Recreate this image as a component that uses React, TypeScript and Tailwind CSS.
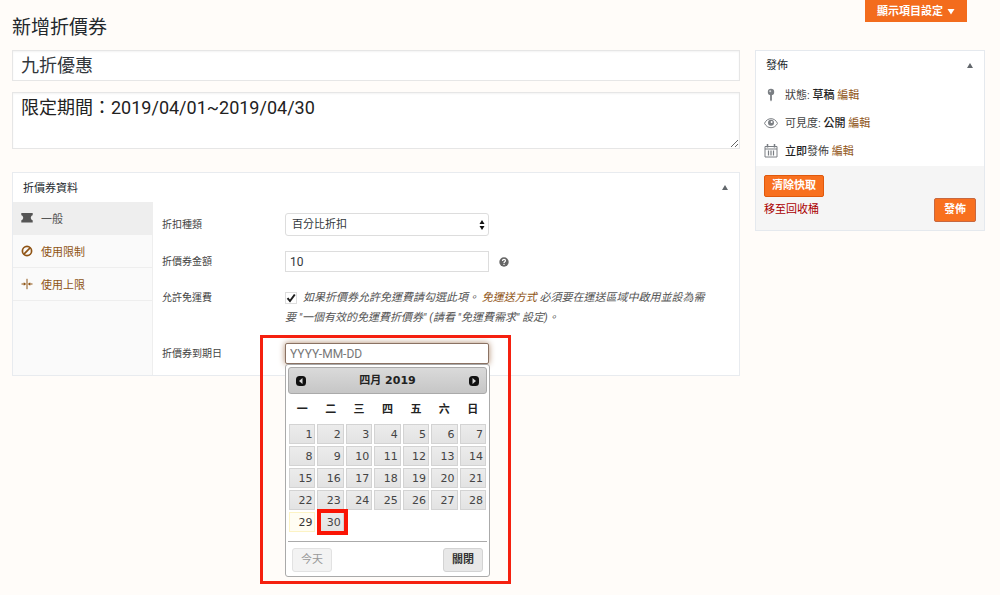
import { useState } from "react";

const WEEKDAYS = ["一", "二", "三", "四", "五", "六", "日"];
const WEEKS = [
  [1, 2, 3, 4, 5, 6, 7],
  [8, 9, 10, 11, 12, 13, 14],
  [15, 16, 17, 18, 19, 20, 21],
  [22, 23, 24, 25, 26, 27, 28],
  [29, 30],
];

function TicketIcon() {
  return (
    <svg viewBox="0 0 12 12" className="h-3 w-3" fill="currentColor" aria-hidden="true">
      <path d="M.3 1h11.4v2.200C10.500 3.500 9.800 4.500 9.800 5.700s.7 2.200 1.900 2.500v2.300H.3V8.200c1.200-.3 1.900-1.300 1.900-2.500S1.500 3.500.3 3.200z" />
    </svg>
  );
}

function BanIcon() {
  return (
    <svg viewBox="0 0 12 12" className="h-3 w-3" fill="none" stroke="currentColor" strokeWidth="1.7" aria-hidden="true">
      <circle cx="6" cy="6" r="4.600" />
      <path d="M2.900 9.100L9.100 2.900" />
    </svg>
  );
}

function LimitIcon() {
  return (
    <svg viewBox="0 0 12 12" className="h-3 w-3" fill="none" stroke="currentColor" aria-hidden="true">
      <path d="M6 .8v10.400" strokeWidth="1" />
      <path d="M.5 6h4M7.500 6h4" strokeWidth="1" />
      <path d="M2.800 4.200L5 6 2.800 7.800zM9.200 4.200L7 6l2.200 1.800z" fill="currentColor" stroke="none" />
    </svg>
  );
}

function PinIcon() {
  return (
    <svg viewBox="0 0 14 14" className="h-3.5 w-3.5" aria-hidden="true">
      <circle cx="7" cy="4" r="3.200" fill="#7a7e83" />
      <circle cx="6.200" cy="3.200" r="1" fill="#d5d7d9" />
      <path d="M6.100 6.500h1.800V12L7 13.500 6.100 12z" fill="#7a7e83" />
    </svg>
  );
}

function EyeIcon() {
  return (
    <svg viewBox="0 0 14 14" className="h-3.5 w-3.5" fill="none" stroke="#7a7e83" aria-hidden="true">
      <path d="M.5 7.300C2 4.200 4.300 2.700 7 2.700s5 1.500 6.500 4.600C12 10.300 9.700 11.700 7 11.700S2 10.300.5 7.300z" strokeWidth="1" />
      <circle cx="7" cy="6.800" r="3" fill="#7a7e83" stroke="none" />
      <circle cx="7.600" cy="5.900" r="1" fill="#fff" stroke="none" />
    </svg>
  );
}

function CalendarIcon() {
  return (
    <svg viewBox="0 0 14 14" className="h-3.5 w-3.5" fill="none" stroke="#7a7e83" aria-hidden="true">
      <path d="M1 2.500h12v10.500H1zM1 5h12" />
      <path d="M3.500 0v3.500M10.500 0v3.500" strokeWidth="1.500" />
      <path d="M4.500 6.500v5M7 6.500v5M9.500 6.500v5" strokeWidth="1.200" />
    </svg>
  );
}

function Toggle({ label }: { label: string }) {
  return (
    <button type="button" aria-label={label} className="text-[#62676c]">
      <svg viewBox="0 0 6 5" className="h-[5px] w-1.5" fill="currentColor" aria-hidden="true">
        <path d="M3 0l3 5H0z" />
      </svg>
    </button>
  );
}

const TABS = [
  { label: "一般", icon: <TicketIcon />, active: true },
  { label: "使用限制", icon: <BanIcon />, active: false },
  { label: "使用上限", icon: <LimitIcon />, active: false },
];

const STATUS = [
  { icon: <PinIcon />, label: "狀態: ", value: "草稿", rest: "" },
  { icon: <EyeIcon />, label: "可見度: ", value: "公開", rest: "" },
  { icon: <CalendarIcon />, label: "", value: "立即", rest: "發佈" },
];

function DatePicker() {
  return (
    <div className="absolute top-full -right-px left-0 z-10 rounded-[3px] border border-[#aaa] bg-white px-0.5 pt-0.5 pb-1 font-['DejaVu_Sans','Noto_Sans_CJK_TC',sans-serif] text-[11px] text-[#222]">
      <div className="flex h-[27px] items-center justify-between rounded-[3px] border border-[#aaa] bg-linear-to-b from-[#dadada] to-[#c6c6c6] px-1.5 font-bold">
        <button type="button" aria-label="上個月">
          <svg viewBox="0 0 12 12" className="h-3 w-3" aria-hidden="true">
            <rect x="1" y="1" width="10" height="10" rx="3.500" fill="#111" />
            <path d="M7.500 3v6L4 6z" fill="#d8d8d8" />
          </svg>
        </button>
        <span>四月 2019</span>
        <button type="button" aria-label="下個月">
          <svg viewBox="0 0 12 12" className="h-3 w-3" aria-hidden="true">
            <rect x="1" y="1" width="10" height="10" rx="3.500" fill="#111" />
            <path d="M4.500 3v6L8 6z" fill="#d8d8d8" />
          </svg>
        </button>
      </div>
      <table className="w-full table-fixed border-collapse">
        <thead>
          <tr className="h-[29px]">
            {WEEKDAYS.map((day) => (
              <th key={day} className="p-0 pt-0.5 font-bold">
                {day}
              </th>
            ))}
          </tr>
        </thead>
        <tbody>
          {WEEKS.map((week) => (
            <tr key={week[0]}>
              {week.map((day) => (
                <td key={day} className="relative h-[22px] p-px">
                  <button
                    type="button"
                    className={
                      day === 29
                        ? "block h-5 w-full border border-[#fcf3c4] bg-[#fffdf3] pr-0.5 text-right leading-5 text-[#363636]"
                        : "block h-5 w-full border border-[#d3d3d3] bg-linear-to-b from-[#ececec] to-[#e3e3e3] pr-0.5 text-right leading-5 text-[#444]"
                    }
                  >
                    {day}
                  </button>
                  {day === 30 && (
                    <span className="pointer-events-none absolute -inset-y-0.5 -right-[3px] left-px border-4 border-[#fa1505]" />
                  )}
                </td>
              ))}
            </tr>
          ))}
        </tbody>
      </table>
      <div className="mt-2 flex justify-between border-t border-[#aaa] px-1 pt-1.5">
        <button
          type="button"
          className="h-6 w-10 rounded-[3px] border border-[#e2e2e2] bg-[#f3f3f3] text-[#999]"
        >
          今天
        </button>
        <button
          type="button"
          className="h-6 w-10 rounded-[3px] border border-[#d3d3d3] bg-[#e8e8e8] font-bold text-[#333]"
        >
          關閉
        </button>
      </div>
    </div>
  );
}

export default function App() {
  const [title, setTitle] = useState("九折優惠");
  const [description, setDescription] = useState("限定期間：2019/04/01~2019/04/30");
  const [amount, setAmount] = useState("10");
  const [freeShipping, setFreeShipping] = useState(true);
  const [expiry, setExpiry] = useState("");

  return (
    <div className="min-h-screen bg-[#fffcf9] pr-[15px] pl-3 font-['Roboto','Noto_Sans_CJK_TC',sans-serif] text-[11px] leading-4 text-[#444]">
      <div className="flex h-[50px] items-start justify-between pr-[18px]">
        <h1 className="pt-3.5 text-[19px] leading-7 text-[#23282d]">新增折價券</h1>
        <button
          type="button"
          className="flex h-[22px] items-center gap-1 bg-[#f36c1d] px-3 pt-px font-bold text-white"
        >
          顯示項目設定
          <svg viewBox="0 0 8 6" className="h-1.5 w-2" fill="currentColor" aria-hidden="true">
            <path d="M.5 0h7L4 5.500z" />
          </svg>
        </button>
      </div>

      <div className="flex items-start gap-[15px]">
        <main className="min-w-0 flex-1">
          <input
            aria-label="折價券代碼"
            value={title}
            onChange={(e) => setTitle(e.target.value)}
            className="block h-[31px] w-full border border-[#e6e6e6] bg-white px-2 pb-1 text-lg leading-6 text-[#32373c] shadow-[inset_0_1px_2px_rgba(0,0,0,0.05)]"
          />
          <textarea
            aria-label="描述"
            value={description}
            onChange={(e) => setDescription(e.target.value)}
            className="mt-[11px] block h-[57px] w-full border border-[#e6e6e6] bg-white px-2 py-px text-lg leading-7 text-[#222] shadow-[inset_0_1px_2px_rgba(0,0,0,0.05)]"
          />

          <section className="mt-[23px] border border-[#e8ebef] bg-white">
            <header className="flex h-[29px] items-center justify-between pr-[11px] pl-2.5">
              <h2 className="pt-0.5 text-[#23282d]">折價券資料</h2>
              <Toggle label="收合折價券資料" />
            </header>
            <div className="flex">
              <nav className="w-[140px] shrink-0 border-r border-[#eee] bg-[#fafafa]">
                {TABS.map((tab) => (
                  <a
                    key={tab.label}
                    href="#"
                    className={
                      tab.active
                        ? "flex h-[33px] items-center gap-2 border-b border-[#eee] bg-[#eee] pl-2 text-[#555]"
                        : "flex h-[33px] items-center gap-2 border-b border-[#eee] pl-2 text-[#8f5415]"
                    }
                  >
                    {tab.icon}
                    <span className="pt-[3px]">{tab.label}</span>
                  </a>
                ))}
              </nav>

              <div className="flex min-w-0 flex-1 flex-col gap-[15px] py-[11px] pr-[30px] pl-[9px]">
                <div className="flex items-center">
                  <label htmlFor="type" className="w-[123px] shrink-0 text-[10px]">
                    折扣種類
                  </label>
                  <div className="relative w-[204px]">
                    <select
                      id="type"
                      className="block h-[23px] w-full appearance-none rounded-[3px] border border-[#ddd] bg-white px-1.5 text-[#32373c]"
                    >
                      <option>百分比折扣</option>
                    </select>
                    <svg
                      viewBox="0 0 6 10"
                      className="pointer-events-none absolute top-[7px] right-1 h-2.5 w-1.5"
                      fill="#111"
                      aria-hidden="true"
                    >
                      <path d="M3 0l2.500 4h-5zM3 10L.5 6h5z" />
                    </svg>
                  </div>
                </div>

                <div className="flex items-center">
                  <label htmlFor="amount" className="w-[123px] shrink-0 text-[10px]">
                    折價券金額
                  </label>
                  <input
                    id="amount"
                    value={amount}
                    onChange={(e) => setAmount(e.target.value)}
                    className="block h-[21px] w-[204px] border border-[#ddd] bg-white px-1 text-xs text-[#32373c]"
                  />
                  <button type="button" aria-label="說明" className="ml-2.5">
                    <svg viewBox="0 0 10 10" className="h-2.5 w-2.5" aria-hidden="true">
                      <circle cx="5" cy="5" r="4.700" fill="#666" />
                      <path
                        d="M3.500 3.900C3.500 2.900 4.100 2.400 5 2.400s1.500.5 1.500 1.300C6.500 4.700 5 4.700 5 5.900M5 6.800v1.100"
                        fill="none"
                        stroke="#fff"
                        strokeWidth="1.200"
                      />
                    </svg>
                  </button>
                </div>

                <div className="flex items-start pt-px">
                  <label htmlFor="free" className="w-[123px] shrink-0 text-[10px] leading-5">
                    允許免運費
                  </label>
                  <p className="leading-5 text-[#555] italic">
                    <span className="relative mr-1.5 inline-block h-3 w-3 align-middle not-italic">
                      <input
                        id="free"
                        type="checkbox"
                        checked={freeShipping}
                        onChange={(e) => setFreeShipping(e.target.checked)}
                        className="block h-3 w-3 appearance-none border border-[#ddd] bg-white"
                      />
                      {freeShipping && (
                        <svg
                          viewBox="0 0 12 12"
                          className="pointer-events-none absolute inset-0 h-3 w-3"
                          fill="none"
                          stroke="#1e1e1e"
                          strokeWidth="2"
                          aria-hidden="true"
                        >
                          <path d="M2.500 6.200L5 9l4.800-6.500" />
                        </svg>
                      )}
                    </span>
                    <span>如果折價券允許免運費請勾選此項。</span>{" "}
                    <a href="#" className="text-[#8f5415]">
                      免運送方式
                    </a>{" "}
                    <span>必須要在運送區域中啟用並設為需</span>
                    <span>要 "一個有效的免運費折價券" (請看 "免運費需求" 設定)。</span>
                  </p>
                </div>

                <div className="flex items-center">
                  <label htmlFor="expiry" className="w-[123px] shrink-0 text-[10px]">
                    折價券到期日
                  </label>
                  <div className="relative w-[204px]">
                    <input
                      id="expiry"
                      value={expiry}
                      placeholder="YYYY-MM-DD"
                      onChange={(e) => setExpiry(e.target.value)}
                      className="block h-[21px] w-full rounded-xs border border-[#8a7263] bg-white px-1 text-xs shadow-[0_0_6px_#b08a6c] placeholder:text-[#777]"
                    />
                    <DatePicker />
                    <div className="pointer-events-none absolute -top-2 -right-[22px] -left-[25px] z-20 h-[249px] border-3 border-[#f5200f]" />
                  </div>
                </div>
              </div>
            </div>
          </section>
        </main>

        <aside className="w-[230px] shrink-0 border border-[#e5e9ee] bg-white">
          <header className="flex h-[29px] items-center justify-between pr-[11px] pl-2.5">
            <h2 className="text-[#23282d]">發佈</h2>
            <Toggle label="收合發佈" />
          </header>
          <ul className="flex flex-col gap-2.5 py-1.5 pl-2">
            {STATUS.map((row) => (
              <li key={row.value} className="flex items-center gap-[7px]">
                {row.icon}
                <span className="pt-0.5">
                  {row.label}
                  <b className="font-medium text-[#222]">{row.value}</b>
                  {row.rest}{" "}
                  <a href="#" className="text-[#8f5415]">
                    編輯
                  </a>
                </span>
              </li>
            ))}
          </ul>
          <footer className="flex items-end justify-between bg-[#f5f5f5] px-2 pt-[9px] pb-2">
            <div className="flex flex-col items-start gap-[5px] pb-1">
              <button
                type="button"
                className="h-[22px] rounded-xs border border-[#e0590c] bg-[#f8701f] px-[7px] font-bold text-white"
              >
                清除快取
              </button>
              <a href="#" className="text-[#a00]">
                移至回收桶
              </a>
            </div>
            <button
              type="button"
              className="h-6 rounded-xs border border-[#c7683f] bg-[#f8701f] px-[9px] font-bold text-white"
            >
              發佈
            </button>
          </footer>
        </aside>
      </div>
    </div>
  );
}
